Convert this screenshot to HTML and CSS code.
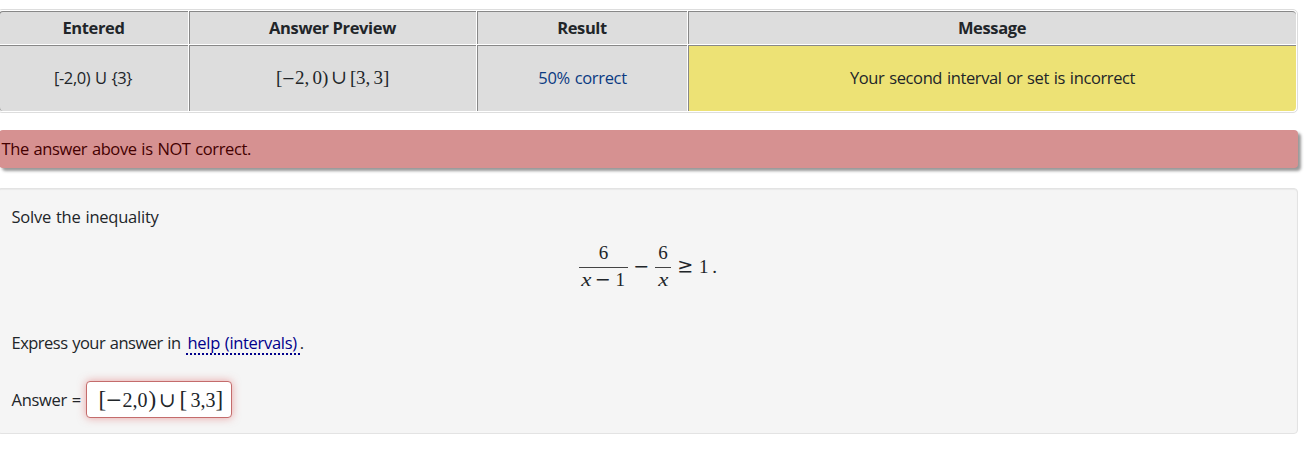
FILE: index.html
```html
<!DOCTYPE html>
<html lang="en">
<head>
    <meta charset="UTF-8">
    <meta name="viewport" content="width=device-width, initial-scale=1.0">
    <title>Solve the inequality</title>
    <link rel="stylesheet" href="styles.css">
</head>
<body>
    <table class="results">
        <colgroup>
            <col class="col-entered">
            <col class="col-preview">
            <col class="col-result">
            <col class="col-message">
        </colgroup>
        <thead>
            <tr>
                <th>Entered</th>
                <th>Answer Preview</th>
                <th>Result</th>
                <th>Message</th>
            </tr>
        </thead>
        <tbody>
            <tr>
                <td class="entered">[-2,0) U {3}</td>
                <td>
                    <div class="math preview">
                        <span class="fence">[</span><span class="minus">−</span><span class="num">2</span><span class="comma">,</span><span class="num">0</span><span class="fence">)</span><span class="union">∪</span><span class="fence">[</span><span class="num">3</span><span class="comma">,</span><span class="num">3</span><span class="fence">]</span>
                    </div>
                </td>
                <td class="partial">50% correct</td>
                <td class="message">Your second interval or set is incorrect</td>
            </tr>
        </tbody>
    </table>

    <div class="alert">The answer above is NOT correct.</div>

    <div class="problem">
        <p class="prompt">Solve the inequality</p>
        <div class="math equation">
            <span class="frac frac-wide">
                <span class="top">6</span>
                <span class="bottom"><i>x</i><span class="minus">−</span><span>1</span></span>
            </span>
            <span class="minus">−</span>
            <span class="frac">
                <span class="top">6</span>
                <span class="bottom"><i>x</i></span>
            </span>
            <span class="geq">≥</span>
            <span class="one">1</span>
            <span class="dot">.</span>
        </div>
        <p class="express"><span>Express your answer in</span><a class="help" href="#">help (intervals)</a><span>.</span></p>
        <div class="answer">
            <label>Answer =</label>
            <div class="math answer-box">
                <span class="fence">[</span><span class="minus">−</span><span class="num">2</span><span class="comma">,</span><span class="num">0</span><span class="fence close">)</span><span class="union">∪</span><span class="fence open">[</span><span class="num">3</span><span class="comma">,</span><span class="num">3</span><span class="fence">]</span>
            </div>
        </div>
    </div>
</body>
</html>
```
FILE: styles.css
```css
* {
    box-sizing: border-box;
}
body {
    margin: 0;
    padding-top: 9px;
    background-color: #fff;
    color: #212529;
    font-family: 'Open Sans', sans-serif;
    font-size: 16.5px;
    line-height: 24px;
    letter-spacing: -0.4px;
    word-spacing: 0.9px;
    overflow: hidden;
}
p {
    margin: 0;
}

/* results table */
.results {
    table-layout: fixed;
    width: 1301px;
    margin-left: -3px;
    border: 1px solid #ddd;
    border-radius: 5px;
    border-collapse: separate;
    border-spacing: 1px;
}
.col-entered { width: 189px; }
.col-preview { width: 287px; }
.col-result { width: 210px; }
.col-message { width: 608px; }
.results th,
.results td {
    padding: 0;
    text-align: center;
    vertical-align: middle;
    background-color: #ddd;
    border-top: 1px solid #888;
    border-left: 1px solid #888;
    white-space: nowrap;
}
.results th {
    height: 33px;
    padding-right: 1px;
    font-weight: 700;
    letter-spacing: -0.37px;
    word-spacing: 0;
}
.results td {
    height: 66px;
    padding-bottom: 2px;
}
.results th:first-child { border-top-left-radius: 4px; }
.results th:last-child { border-top-right-radius: 4px; }
.results td:last-child { border-bottom-right-radius: 4px; }
.results td:first-child { border-bottom-left-radius: 4px; }
.results .entered {
    padding-right: 2px;
}
.results .partial {
    color: #0a3a82;
    letter-spacing: -0.33px;
}
.results .message {
    background-color: #ede275;
    letter-spacing: -0.38px;
}

.alert {
    width: 1299px;
    height: 38px;
    margin: 17px 0 0 -1px;
    padding: 7px 2.5px;
    border-radius: 4px;
    background-color: #d69191;
    color: #400;
    box-shadow: 3px 3px 3px #999;
}

/* problem text */
.problem {
    width: 1301px;
    height: 246px;
    margin: 20px 0 0 -3px;
    padding: 16px 13.5px 0;
    border: 1px solid #e3e3e3;
    border-radius: 4px;
    background-color: #f5f5f5;
    box-shadow: inset 0 1px 1px rgba(0, 0, 0, 0.05);
}
.prompt {
    letter-spacing: -0.23px;
}
.express {
    display: flex;
    margin-top: 39px;
}
.express > span:first-child {
    letter-spacing: -0.52px;
}
.help {
    height: 24px;
    margin-left: 5px;
    padding: 0 3px 0 2px;
    color: #00008b;
    letter-spacing: -0.31px;
    text-decoration: none;
    border-bottom: 2px dotted #00008b;
}
.answer {
    display: flex;
    align-items: center;
    margin-top: 26px;
}
.answer label {
    letter-spacing: -0.3px;
}
.answer-box {
    width: 146px;
    height: 37px;
    margin-left: 5.5px;
    padding: 1px 0 0 11px;
    border: 1px solid #c46c6c;
    border-radius: 4px;
    background-color: #fff;
    box-shadow: 0 0 8px rgba(220, 80, 80, 0.5);
}

/* math */
.math {
    display: flex;
    align-items: center;
    font-family: 'Liberation Serif', serif;
    font-size: 19px;
    letter-spacing: 0;
    word-spacing: 0;
}
.math > span {
    flex: none;
    text-align: center;
}
.minus,
.union,
.geq {
    font-family: 'DejaVu Math TeX Gyre', 'Liberation Serif', serif;
}
.preview {
    width: 114px;
    margin: 0 auto;
}
.preview .fence { width: 6px; }
.preview .minus { width: 13px; font-size: 16px; }
.preview .num { width: 9.5px; }
.preview .comma { width: 8px; text-align: left; }
.preview .union { width: 22px; }
.answer-box { font-size: 20px; }
.answer-box .fence { width: 7px; font-size: 23px; }
.answer-box .open { margin-right: 4px; }
.answer-box .close { margin-left: 1px; }
.answer-box .minus { width: 17px; }
.answer-box .num { width: 10px; }
.answer-box .comma { width: 5px; }
.answer-box .union { width: 24px; }
.equation {
    width: 140px;
    height: 50px;
    margin: 13px 0 0 567.5px;
}
.frac {
    width: 16px;
}
.frac-wide {
    width: 49px;
}
.frac .top,
.frac .bottom {
    display: flex;
    justify-content: center;
    height: 24px;
}
.frac .top {
    position: relative;
    top: -2px;
}
.frac .bottom {
    border-top: 1px solid #444;
}
.frac .bottom i {
    transform: scaleX(1.2);
}
.frac .bottom .minus {
    width: 25px;
    text-align: center;
}
.equation > .minus { width: 27px; }
.geq { width: 28px; }
.one { width: 9px; }
.dot { width: 13px; }
```
